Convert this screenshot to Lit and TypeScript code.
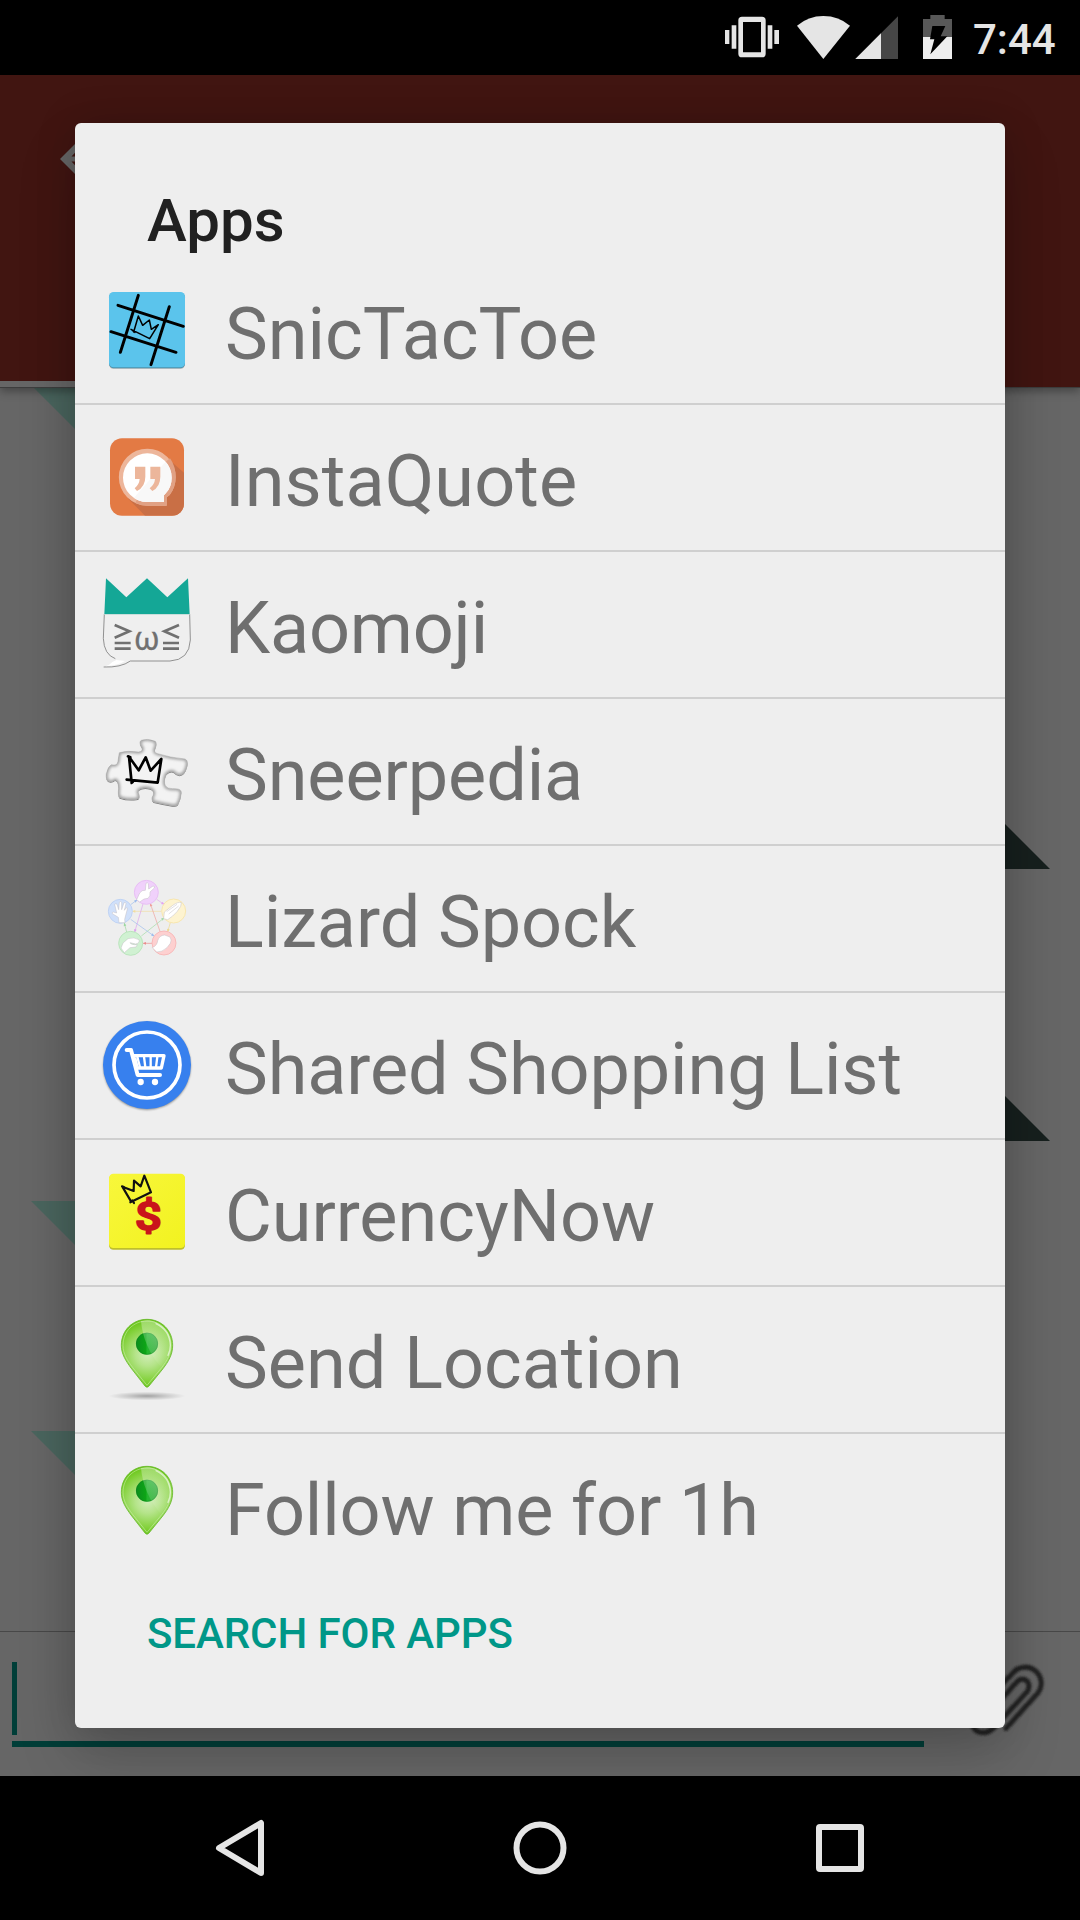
import { LitElement, html, svg, css } from "lit";
import { customElement } from "lit/decorators.js";

const snic = svg`
  <rect x="102" y="70" width="228" height="227" rx="14" fill="#000" opacity=".18"/>
  <rect x="102" y="68" width="228" height="227" rx="14" fill="#4b93ae"/>
  <rect x="102" y="66" width="228" height="226" rx="14" fill="#5bc4ec"/>
  <g fill="none" stroke="#000" stroke-linecap="round" stroke-linejoin="round">
    <path stroke-width="9" d="M190 76L136 247M283 110L228 284M129 106L325 169M108 185L303 247"/>
    <path stroke-width="4.5" d="M176 186L190 138L203 166L223 150L229 178L250 164L224 206L168 178M172 181L180 187"/>
  </g>`;

const quote = svg`
  <defs><clipPath id="q"><rect x="105" y="505" width="222" height="232" rx="36"/></clipPath></defs>
  <rect x="105" y="505" width="222" height="232" rx="36" fill="#e37a44"/>
  <path clip-path="url(#q)" fill="#c96f45" d="M272 560L327 608V737H210L160 686Z"/>
  <path fill="#edb69b" d="M217 536a85 85 0 0 1 85 85q0 30-18 54l-9 7v25h-58a85.500 85.500 0 0 1 0-171z"/>
  <path fill="#e1a184" d="M275 573L285 565Q302 588 302 621q0 30-18 54l-9 7v25h-58q-20 0-36-8L190 680Z"/>
  <path fill="#fff" d="M217 550a73 73 0 0 1 73 73q0 28-17 46l-6 7v20h-50a73 73 0 0 1 0-146z"/>
  <path fill="#f8f8f8" d="M272 575a73 73 0 0 1 18 48q0 28-17 46l-6 7v20h-50q-21 0-40-13Z"/>
  <path fill="#ecb69b" d="M180 590h31v30q0 30-25 43l-7-8q14-12 15-28h-14zM226 590h30v30q0 30-24 43l-8-8q15-12 16-28h-14z"/>`;

const kaomoji = svg`
  <path d="M88 162L85 235Q87 286 121 297Q107 315 86 322Q135 324 166 304H285Q343 302 346 245L344 162Z" fill="#efefef"/>
  <path d="M88 162L85 235Q87 284 121 296M344 162L346 240Q343 300 285 303H166Q138 323 86 321" fill="none" stroke="#7d7d7d" stroke-width="2.500"/>
  <path d="M112 306Q104 315 92 319Q130 316 150 303L124 300Z" fill="#fff"/>
  <path d="M93 55L154 112L216 55L277 112L339 55L344 163H88Z" fill="#14a796"/>
  <path d="M88 163.500H344" stroke="#c9dedb" stroke-width="3"/>
  <path d="M119 195L163 214L119 233M312 195L268 214L312 233" fill="none" stroke="#707070" stroke-width="8"/>
  <path d="M119 249H167M119 266H167M264 249H312M264 266H312" stroke="#707070" stroke-width="8"/>
  <text x="215.500" y="271" text-anchor="middle" font-family="Noto Sans, DejaVu Sans, sans-serif" font-size="98" textLength="78" lengthAdjust="spacingAndGlyphs" fill="#707070" stroke="#707070" stroke-width="1">ω</text>`;

const puzzlePath =
  "M133 578Q158 571 190 576Q207 574 200 561Q190 546 199 541Q217 534 241 544Q247 551 240 566Q235 578 248 581Q285 593 330 597Q341 602 336 619Q330 645 313 646Q303 645 297 637Q286 630 274 642Q264 663 271 677Q277 687 293 686Q318 685 319 696Q318 716 309 733Q304 739 292 737Q262 732 236 726Q226 718 235 705Q239 692 226 686Q204 680 191 690Q187 696 193 707Q194 717 184 718Q156 721 134 713Q128 707 131 685Q130 660 120 660Q111 668 101 664Q92 660 94 641Q99 619 109 614Q127 619 129 604Q131 589 133 578Z";

const puzzle = svg`
  <defs><filter id="soft"><feGaussianBlur stdDeviation="4"/></filter>
  <clipPath id="pz"><path d=${puzzlePath}/></clipPath></defs>
  <path d=${puzzlePath} fill="#777" transform="translate(0 3)"/>
  <path d=${puzzlePath} fill="#f3f3f3" stroke="#b8b8b8" stroke-width="2"/>
  <g clip-path="url(#pz)"><path d=${puzzlePath} fill="none" stroke="#999" stroke-width="9" filter="url(#soft)"/></g>
  <path d="M170 669L162 590L191 631L212 592L227 632L259 597L248 668L155 659M159 589L166 592M165 660L173 666" fill="none" stroke="#000" stroke-width="8" stroke-linecap="round" stroke-linejoin="round"/>`;

const ring = (x: number, y: number, fill: string, line: string) =>
  svg`<circle cx=${x} cy=${y} r="36" fill=${fill} stroke=${line} stroke-width="2.500"/>`;

const arrow = (x1: number, y1: number, x2: number, y2: number, c: string) => {
  const a = (Math.atan2(y2 - y1, x2 - x1) * 180) / Math.PI;
  return svg`<path d="M${x1} ${y1}L${x2} ${y2}" stroke=${c} stroke-width="2"/>
    <path d="M2 0L-8 4V-4Z" fill=${c} transform="translate(${x2} ${y2}) rotate(${a})"/>`;
};

const lizard = svg`
  ${arrow(167, 134, 186, 120, "#9dbcec")}
  ${arrow(245, 118, 267, 133, "#e3a5ef")}
  ${arrow(258, 154, 173, 154, "#f1dda0")}
  ${arrow(286, 188, 278, 215, "#eed88c")}
  ${arrow(204, 132, 179, 216, "#dda0ee")}
  ${arrow(256, 217, 226, 131, "#eea09c")}
  ${arrow(199, 228, 267, 174, "#a1dba5")}
  ${arrow(167, 178, 237, 228, "#9dbcec")}
  ${arrow(231, 250, 205, 250, "#ea8c8c")}
  ${arrow(155, 216, 148, 190, "#9bd8a0")}
  ${ring(214, 97, "#f0d1fb", "#e6b9f3")}
  ${ring(136, 154, "#d0e0fa", "#b9cff3")}
  ${ring(296, 153, "#fdf3d0", "#f6e3a6")}
  ${ring(167, 250, "#d0f1d2", "#b4e2b7")}
  ${ring(267, 249, "#fdd0d0", "#f6b3b3")}
  <g fill="#fff" stroke="#c2bfc4" stroke-width="1.500" stroke-linejoin="round">
    <path d="M185 119L194 99Q201 89 211 91L213 70Q217 66 220 71L221 87L234 78Q240 78 238 84L225 96Q227 109 219 115L207 117L194 126Z"/>
    <path d="M132 188L130 172L112 161Q110 157 115 156L125 159L119 133Q123 129 126 133L131 149L133 127Q137 122 140 127L140 149L147 128Q152 126 153 131L148 151L154 143Q158 142 157 147L149 178L150 188Z"/>
    <path d="M266 176L268 156L292 137Q310 124 319 128L317 139L306 155L293 168L278 179Z"/>
    <path d="M275 155L306 133M281 162L311 138" fill="none"/>
    <path d="M138 264L144 249L159 236Q177 230 192 239Q195 249 182 252L165 248Q168 255 187 254L183 261L165 263L148 278Z"/>
    <path d="M232 263Q247 256 248 242Q253 226 269 225L285 231Q291 240 286 250L276 263Q261 277 245 276Z"/>
  </g>`;

const cart = svg`
  <defs><filter id="cs" x="-20%" y="-20%" width="140%" height="140%"><feGaussianBlur stdDeviation="2.500"/></filter></defs>
  <circle cx="216" cy="618" r="131" fill="#000" opacity=".45" filter="url(#cs)"/>
  <circle cx="216" cy="615" r="132" fill="#3780ee"/>
  <circle cx="216" cy="615" r="99" fill="none" stroke="#fff" stroke-width="11"/>
  <g fill="none" stroke="#fff" stroke-linecap="round" stroke-linejoin="round">
    <path stroke-width="12" d="M155 570H168L188 645H255"/>
    <path stroke-width="10" d="M176 587H267L259 624H186"/>
    <path stroke-width="7" stroke-linecap="butt" d="M187 590L195 622M207 590L211 622M227 590L227 622M247 590L243 622"/>
  </g>
  <path d="M178 592L184 592L191 620L185 620Z" fill="#fff"/>
  <circle cx="197" cy="666" r="9.500" fill="#fff"/><circle cx="240" cy="666" r="9.500" fill="#fff"/>`;

const currency = svg`
  <defs><linearGradient id="yl" x1="0" y1="0" x2="1" y2="1"><stop offset="0" stop-color="#f8f73b"/><stop offset="1" stop-color="#f2f220"/></linearGradient></defs>
  <rect x="102" y="74" width="228" height="225" rx="13" fill="#bfbf2b"/>
  <rect x="102" y="71" width="228" height="223" rx="13" fill="url(#yl)"/>
  <path d="M168 154L142 110L176 123L177 92L197 109L208 77L228 127L166 157M172 151L177 159M141 109L147 111" fill="none" stroke="#111" stroke-width="6.500" stroke-linecap="round" stroke-linejoin="round"/>
  <text x="220" y="240" text-anchor="middle" font-family="Roboto, sans-serif" font-weight="500" font-size="116" textLength="80" lengthAdjust="spacingAndGlyphs" fill="#c9151b" stroke="#c9151b" stroke-width="6" stroke-linejoin="round">$</text>`;

/* Glossy map pin; the Send Location variant stands on a soft ground shadow. */
const pin = (id: string, shadow: boolean) => svg`
  <defs>
    <radialGradient id="b${id}" gradientUnits="userSpaceOnUse" cx="218" cy="612" r="105">
      <stop offset="0" stop-color="#d3edbb"/><stop offset=".35" stop-color="#b5e48a"/><stop offset=".75" stop-color="#85d23e"/><stop offset="1" stop-color="#65c412"/>
    </radialGradient>
    <linearGradient id="d${id}" x1="0" y1="0" x2="1" y2="0"><stop offset="0" stop-color="#0b8e1d"/><stop offset=".45" stop-color="#0da516"/><stop offset=".5" stop-color="#22b42d"/><stop offset="1" stop-color="#36ad3c"/></linearGradient>
    <linearGradient id="g${id}" x1="0" y1="0" x2="0" y2="1"><stop offset="0" stop-color="#fff" stop-opacity=".45"/><stop offset="1" stop-color="#fff" stop-opacity=".05"/></linearGradient>
    <radialGradient id="s${id}"><stop offset="0" stop-color="#000" stop-opacity=".32"/><stop offset=".5" stop-color="#000" stop-opacity=".15"/><stop offset="1" stop-color="#000" stop-opacity="0"/></radialGradient>
  </defs>
  ${shadow ? svg`<ellipse cx="216" cy="738" rx="115" ry="13" fill="url(#s${id})"/>` : null}
  <path d="M216 508C258 508 293 540 293 586C293 614 280 635 264 656L222 708Q216 716 210 708L168 654C152 632 139 612 139 586C139 540 174 508 216 508Z" fill="url(#b${id})" stroke="#69b82c" stroke-width="2.500"/>
  <path d="M216 513C255 513 288 543 288 586C288 612 276 632 260 653L216 706L172 651C157 631 144 611 144 586C144 543 177 513 216 513Z" fill="none" stroke="#d7f3bd" stroke-width="2" opacity=".75"/>
  <circle cx="216" cy="581" r="33" fill="url(#d${id})"/>
  <circle cx="216" cy="581" r="32" fill="none" stroke="#117b22" stroke-width="2" opacity=".55"/>
  <path d="M198 513Q205 590 257 650Q288 616 288 586C288 543 255 511 216 511Z" fill="url(#g${id})" opacity=".75"/>
  <path d="M243 521Q284 540 286 586Q286 603 279 616" fill="none" stroke="#fff" stroke-width="4" opacity=".6" stroke-linecap="round"/>`;

/* top: upper edge of the icon's view box; track: letter spacing in px */
const apps = [
  { name: "SnicTacToe", top: 36, track: 0, art: snic },
  { name: "InstaQuote", top: 477, track: 0.1, art: quote },
  { name: "Kaomoji", top: 48, track: -0.2, art: kaomoji },
  { name: "Sneerpedia", top: 489, track: -0.1, art: puzzle },
  { name: "Lizard Spock", top: 30, track: -0.05, art: lizard },
  { name: "Shared Shopping List", top: 471, track: -0.1, art: cart },
  { name: "CurrencyNow", top: 42, track: -0.08, art: currency },
  { name: "Send Location", top: 483, track: 0, art: pin("a", true) },
  { name: "Follow me for 1h", top: 483, track: -0.13, art: pin("c", false) },
];

@customElement("app-root")
export class AppRoot extends LitElement {
  static styles = css`
    :host { display: block; font-family: Roboto, "Liberation Sans", sans-serif; }
    .screen { position: relative; width: 1080px; height: 1920px; overflow: hidden; display: flex; flex-direction: column; background: #666; }
    .status { height: 75px; flex: none; background: #000; display: flex; justify-content: flex-end; position: relative; z-index: 2; }
    .status svg { width: 250px; height: 75px; flex: none; }
    .clock { width: 108px; box-sizing: border-box; padding-left: 1px; font-size: 42px; font-weight: 500; line-height: 80px; color: #e5e5e5; white-space: nowrap; }
    .header { height: 313px; flex: none; background: #411511; display: flex; flex-direction: column; justify-content: space-between; border-bottom: 1px solid #3d3d3d; box-sizing: border-box; box-shadow: 0 3px 9px rgba(0,0,0,.35); position: relative; z-index: 1; }
    .back { width: 48px; height: 48px; margin: 60px 0 0 60px; }
    .tab { width: 540px; height: 6px; background: #666; }
    .chat { flex: 1; position: relative; }
    .tail { position: absolute; width: 45px; height: 45px; }
    .tail.in { background: #4a655e; clip-path: polygon(0 0, 100% 0, 100% 100%); }
    .tail.out { background: #17201e; clip-path: polygon(0 0, 100% 100%, 0 100%); }
    .compose { height: 145px; flex: none; border-top: 1px solid #484848; box-sizing: border-box; display: flex; justify-content: space-between; }
    .field { width: 912px; height: 85px; margin: 30px 0 0 12px; border-bottom: 6px solid #003e38; box-sizing: border-box; }
    .caret { width: 5px; height: 73px; background: #003e38; }
    .clip { width: 90px; height: 80px; margin: 28px 30px 0 0; }
    .nav { height: 144px; flex: none; background: #000; position: relative; z-index: 2; display: flex; justify-content: center; align-items: center; gap: 210px; }
    .nav svg { width: 90px; height: 90px; }
    .dialog { position: absolute; z-index: 1; left: 75px; top: 123px; width: 930px; height: 1605px; box-sizing: border-box; background: #eee; border-radius: 6px; display: flex; flex-direction: column; box-shadow: 0 0 40px rgba(0,0,0,.16), 0 30px 60px rgba(0,0,0,.16); }
    .title { height: 135px; box-sizing: border-box; padding: 62px 72px 0; font-size: 60px; font-weight: 500; line-height: 72px; color: #212121; }
    .row { height: 147px; box-sizing: border-box; border-bottom: 2px solid #cfcfcf; display: flex; align-items: flex-start; padding-left: 24px; }
    .row:last-of-type { border-bottom: none; }
    .icon { width: 96px; height: 96px; margin-top: 24px; flex: none; }
    .label { height: 84px; margin: 35px 0 0 30px; color: #6f6f6f; font-size: 72px; line-height: 84px; white-space: nowrap; }
    .list { flex: none; }
    .action { padding: 0 72px; margin-top: 28px; font-size: 42px; font-weight: 500; line-height: 50px; letter-spacing: -0.08px; color: #009788; white-space: nowrap; }
  `;

  render() {
    return html`
      <div class="screen">
        <div class="status">
          <svg viewBox="66 0 750 225">
            <g fill="#e5e5e5">
              <path fill-rule="evenodd" d="M126 50h60q11 0 11 11v100q0 11-11 11h-60q-11 0-11-11v-100q0-11 11-11zM129 66v91h54v-91z"/>
              <path d="M75 90h13v42h-13zM95 76h14v70h-14zM203 76h14v70h-14zM223 90h14v42h-14z"/>
              <path d="M370 177L291 77Q325 48 370 48Q416 48 450 77Z"/>
            </g>
            <path d="M466 177L594 49V177Z" fill="#464646"/>
            <path d="M466 177L543 100V177Z" fill="#e5e5e5"/>
            <path d="M669 111V57h22V45h43v12h22v54z" fill="#585858"/>
            <path d="M669 111h87v66h-87z" fill="#eee"/>
            <path d="M697 78h39l-14 31h20L691 163l12-45h-13z" fill="#000"/>
          </svg>
          <div class="clock">7:44</div>
        </div>
        <div class="header">
          <svg class="back" viewBox="0 0 48 48"><path d="M0 24L22 2l4 4L11.500 21.500H48v5H11.500L26 42l-4 4z" fill="#666"/></svg>
          <div class="tab"></div>
        </div>
        <div class="chat">
          <div class="tail in" style="left:31px;top:-3px"></div>
          <div class="tail out" style="left:1005px;top:436px"></div>
          <div class="tail out" style="left:1005px;top:708px"></div>
          <div class="tail in" style="left:31px;top:813px"></div>
          <div class="tail in" style="left:31px;top:1043px"></div>
        </div>
        <div class="compose">
          <div class="field"><div class="caret"></div></div>
          <svg class="clip" viewBox="780 240 270 240">
            <defs><filter id="cb"><feGaussianBlur stdDeviation="2.500"/></filter></defs>
            <g fill="none" stroke="#222" stroke-width="15" stroke-linecap="round" filter="url(#cb)">
              <path d="M918 445L1011 342A47 47 0 0 0 940 277L825 400Q806 434 830 453Q856 466 881 444L981 336Q992 321 983 305Q967 290 951 305L880 385"/>
            </g>
          </svg>
        </div>
        <div class="nav">
          <svg viewBox="0 0 90 90"><path d="M66 20V70L24 45Z" fill="none" stroke="#e5e5e5" stroke-width="6" stroke-linejoin="round"/></svg>
          <svg viewBox="0 0 90 90"><circle cx="45" cy="45" r="23.500" fill="none" stroke="#e5e5e5" stroke-width="6"/></svg>
          <svg viewBox="0 0 90 90"><path fill-rule="evenodd" d="M25 21h40q4 0 4 4v40q0 4-4 4h-40q-4 0-4-4v-40q0-4 4-4zM27 27v36h36v-36z" fill="#e5e5e5"/></svg>
        </div>
        <div class="dialog">
          <div class="title">Apps</div>
          <div class="list">
            ${apps.map(
              (a) => html`<div class="row">
                <svg class="icon" viewBox="72 ${a.top} 288 288">${a.art}</svg>
                <div class="label" style="letter-spacing:${a.track}px">${a.name}</div>
              </div>`
            )}
          </div>
          <div class="action">SEARCH FOR APPS</div>
        </div>
      </div>
    `;
  }
}
